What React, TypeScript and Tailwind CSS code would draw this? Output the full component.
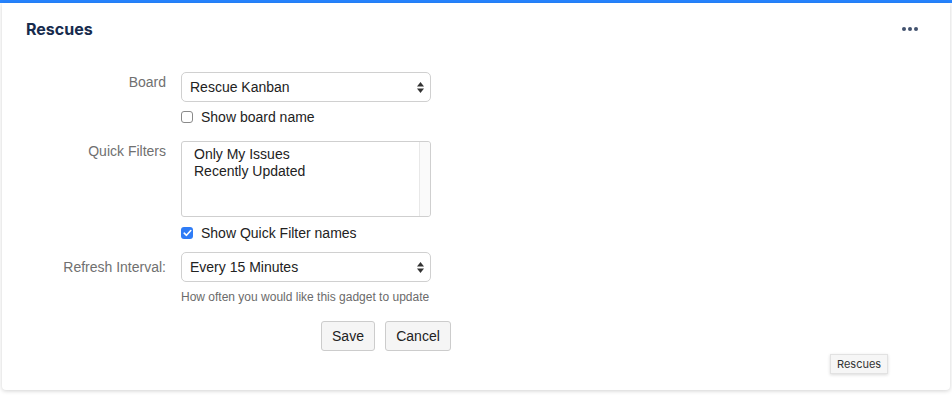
import React from "react";

function Arrows() {
  return (
    <svg width="7" height="11" viewBox="0 0 7 11" className="absolute right-[6px] top-[9px]">
      <path d="M3.5 0 L7 4.5 L0 4.5 Z" fill="#333" />
      <path d="M3.5 11 L7 6.5 L0 6.5 Z" fill="#333" />
    </svg>
  );
}

function Select({ value }: { value: string }) {
  return (
    <div className="relative w-[250px] h-[30px] border border-[#d0d0d0] rounded-[5px] bg-white flex items-center pl-[8px] text-[14px] text-[#222]">
      {value}
      <Arrows />
    </div>
  );
}

function Check({ checked, label }: { checked?: boolean; label: string }) {
  return (
    <div className="flex items-center h-[20px] text-[14px] text-[#222]">
      {checked ? (
        <div className="w-[12px] h-[12px] rounded-[3px] bg-[#2f7cf6] flex items-center justify-center">
          <svg width="9" height="8" viewBox="0 0 9 8">
            <path d="M1.2 4.2 L3.5 6.3 L7.8 1.5" stroke="#fff" strokeWidth="1.6" fill="none" strokeLinecap="round" strokeLinejoin="round" />
          </svg>
        </div>
      ) : (
        <div className="w-[12px] h-[12px] rounded-[3px] border border-[#8a8a8a] bg-white" />
      )}
      <span className="ml-[8px]">{label}</span>
    </div>
  );
}

export default function App() {
  return (
    <div className="w-[952px] h-[396px] bg-white relative overflow-hidden" style={{ fontFamily: '"Liberation Sans", Arial, sans-serif' }}>
      <div className="h-[3px] bg-[#2684ff] w-full" />
      <div className="mx-[2px] h-[387px] bg-white rounded-b-[4px] shadow-[0_1px_4px_rgba(0,0,0,0.18)] relative">
        <div className="flex items-center justify-between h-[52px] pl-[24px] pr-[32px]">
          <div className="text-[16px] font-bold text-[#172b4d]" style={{ fontFamily: "Inter, Roboto, sans-serif" }}>
            Rescues
          </div>
          <div className="flex gap-[2px] items-center">
            <span className="w-[4px] h-[4px] rounded-full bg-[#42526e]" />
            <span className="w-[4px] h-[4px] rounded-full bg-[#42526e]" />
            <span className="w-[4px] h-[4px] rounded-full bg-[#42526e]" />
          </div>
        </div>

        <div className="flex mt-[17px]">
          <div className="w-[164px] text-right text-[14px] leading-[20px] text-[#707070]">Board</div>
          <div className="ml-[15px] flex flex-col">
            <Select value="Rescue Kanban" />
            <div className="mt-[5px]">
              <Check label="Show board name" />
            </div>
          </div>
        </div>

        <div className="flex mt-[14px]">
          <div className="w-[164px] text-right text-[14px] leading-[20px] text-[#707070]">Quick Filters</div>
          <div className="ml-[15px] flex flex-col">
            <div className="w-[250px] h-[76px] border border-[#cfcfcf] rounded-[3px] bg-white flex">
              <div className="flex-1 pl-[12px] pt-[4px] text-[14px] leading-[17px] text-[#222]">
                <div>Only My Issues</div>
                <div>Recently Updated</div>
              </div>
              <div className="w-[11px] border-l border-[#e8e8e8] bg-[#fafafa] rounded-r-[3px]" />
            </div>
            <div className="mt-[6px]">
              <Check checked label="Show Quick Filter names" />
            </div>
          </div>
        </div>

        <div className="flex mt-[9px]">
          <div className="w-[164px] text-right text-[14px] leading-[20px] text-[#707070] pt-[5px]">Refresh Interval:</div>
          <div className="ml-[15px] flex flex-col">
            <Select value="Every 15 Minutes" />
            <div className="mt-[7px] text-[12px] leading-[16px] text-[#6b6b6b]">How often you would like this gadget to update</div>
          </div>
        </div>

        <div className="flex gap-[10px] mt-[16px] pl-[319px]">
          <div className="w-[54px] h-[30px] border border-[#cccccc] rounded-[3px] bg-[#f5f5f5] flex items-center justify-center text-[14px] text-[#222]">
            Save
          </div>
          <div className="w-[66px] h-[30px] border border-[#cccccc] rounded-[3px] bg-[#f5f5f5] flex items-center justify-center text-[14px] text-[#222]">
            Cancel
          </div>
        </div>

        <div className="absolute left-[828px] top-[351px] h-[20px] px-[6px] bg-[#f6f6f6] border border-[#e2e2e2] shadow-[0_1px_3px_rgba(0,0,0,0.15)] flex items-center text-[11px] text-[#333]" style={{ fontFamily: "Inter, Roboto, sans-serif" }}>
          Rescues
        </div>
      </div>
    </div>
  );
}
